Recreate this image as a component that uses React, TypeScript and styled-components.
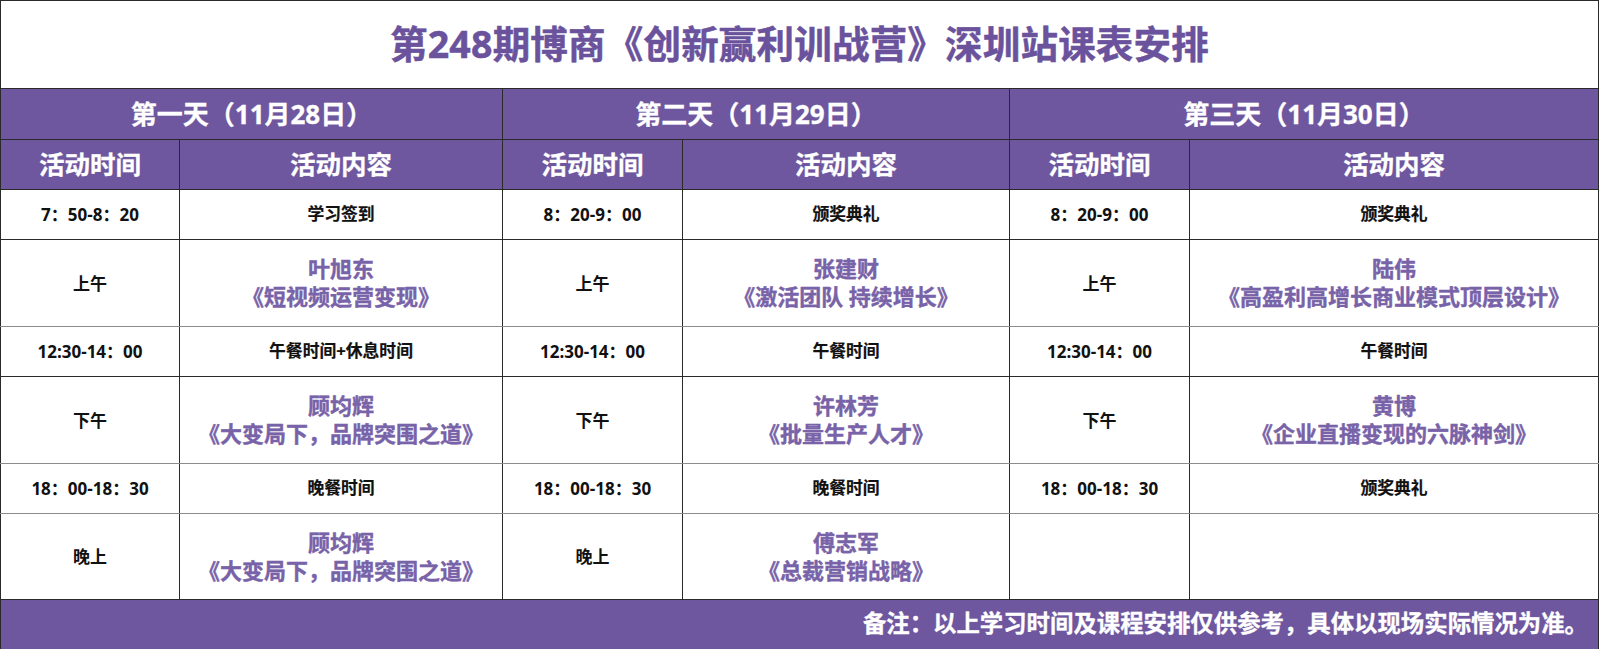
import React from "react";
import styled, { createGlobalStyle } from "styled-components";

const Global = createGlobalStyle`
  html, body { margin: 0; padding: 0; background: #ffffff; }
  body { font-family: "Open Sans", "Noto Sans CJK SC", sans-serif; }
`;

const PURPLE = "#6f579f";
const DARK = "#2a2a2a";
const SOFT = "#8c8c8c";

const Sheet = styled.table`
  width: 1598px;
  table-layout: fixed;
  border-collapse: collapse;
  border: 1px solid ${DARK};
  font-family: "Open Sans", "Noto Sans CJK SC", sans-serif;
  font-weight: 700;
  text-align: center;
`;

const TitleCell = styled.th`
  height: 85px;
  padding: 0 0 2px;
  border: 1px solid ${DARK};
  color: #6a529c;
  font-size: 37.5px;
  line-height: 1;
  letter-spacing: 0.2px;
  -webkit-text-stroke: 0.5px #6a529c;
`;

const HeadCell = styled.th<{ $size: number; $h: number }>`
  height: ${(p) => p.$h}px;
  padding: 0;
  background: ${PURPLE};
  color: #ffffff;
  border: 1px solid ${DARK};
  font-size: ${(p) => p.$size}px;
  line-height: 1;
  -webkit-text-stroke: 0.3px #ffffff;
`;

const Row = styled.tr<{ $h: number; $soft?: boolean }>`
  height: ${(p) => p.$h}px;
  & > td {
    border-bottom: 1px solid ${(p) => (p.$soft ? SOFT : DARK)};
  }
`;

const TimeCell = styled.td`
  padding: 0;
  border-left: 1px solid ${DARK};
  border-right: 1px solid ${DARK};
  color: #111111;
  font-size: 17px;
  line-height: 1;
`;

const PlainCell = styled.td`
  padding: 0;
  border-left: 1px solid ${DARK};
  border-right: 1px solid ${DARK};
  color: #111111;
  font-size: 16.8px;
  line-height: 1;
  -webkit-text-stroke: 0.2px #111111;
`;

const CourseCell = styled.td`
  padding: 0 0 2px;
  border-left: 1px solid ${DARK};
  border-right: 1px solid ${DARK};
  color: #7862a8;
  font-size: 22px;
  line-height: 28px;
  -webkit-text-stroke: 0.4px #7862a8;
`;

const Line = styled.div`
  white-space: nowrap;
`;

const FootCell = styled.td`
  height: 48px;
  padding: 0 10px 2px 0;
  background: ${PURPLE};
  color: #ffffff;
  border: 1px solid ${DARK};
  text-align: right;
  font-size: 23.4px;
  line-height: 1;
  -webkit-text-stroke: 0.3px #ffffff;
`;

type Entry =
  | { kind: "plain"; text: string }
  | { kind: "course"; name: string; title: string }
  | { kind: "empty" };

type Slot = { time: string; entry: Entry };

const days: { label: string; slots: Slot[] }[] = [
  {
    label: "第一天（11月28日）",
    slots: [
      { time: "7：50-8：20", entry: { kind: "plain", text: "学习签到" } },
      { time: "上午", entry: { kind: "course", name: "叶旭东", title: "《短视频运营变现》" } },
      { time: "12:30-14：00", entry: { kind: "plain", text: "午餐时间+休息时间" } },
      { time: "下午", entry: { kind: "course", name: "顾均辉", title: "《大变局下，品牌突围之道》" } },
      { time: "18：00-18：30", entry: { kind: "plain", text: "晚餐时间" } },
      { time: "晚上", entry: { kind: "course", name: "顾均辉", title: "《大变局下，品牌突围之道》" } },
    ],
  },
  {
    label: "第二天（11月29日）",
    slots: [
      { time: "8：20-9：00", entry: { kind: "plain", text: "颁奖典礼" } },
      { time: "上午", entry: { kind: "course", name: "张建财", title: "《激活团队 持续增长》" } },
      { time: "12:30-14：00", entry: { kind: "plain", text: "午餐时间" } },
      { time: "下午", entry: { kind: "course", name: "许林芳", title: "《批量生产人才》" } },
      { time: "18：00-18：30", entry: { kind: "plain", text: "晚餐时间" } },
      { time: "晚上", entry: { kind: "course", name: "傅志军", title: "《总裁营销战略》" } },
    ],
  },
  {
    label: "第三天（11月30日）",
    slots: [
      { time: "8：20-9：00", entry: { kind: "plain", text: "颁奖典礼" } },
      { time: "上午", entry: { kind: "course", name: "陆伟", title: "《高盈利高增长商业模式顶层设计》" } },
      { time: "12:30-14：00", entry: { kind: "plain", text: "午餐时间" } },
      { time: "下午", entry: { kind: "course", name: "黄博", title: "《企业直播变现的六脉神剑》" } },
      { time: "18：00-18：30", entry: { kind: "plain", text: "颁奖典礼" } },
      { time: "", entry: { kind: "empty" } },
    ],
  },
];

const rowSpecs: { h: number; soft: boolean }[] = [
  { h: 50, soft: false },
  { h: 87, soft: true },
  { h: 50, soft: false },
  { h: 87, soft: true },
  { h: 50, soft: true },
  { h: 86, soft: false },
];

const colWidths = [179, 323, 180, 327, 180, 409];

function renderEntry(e: Entry, key: string) {
  if (e.kind === "plain") return <PlainCell key={key}>{e.text}</PlainCell>;
  if (e.kind === "course")
    return (
      <CourseCell key={key}>
        <Line>{e.name}</Line>
        <Line>{e.title}</Line>
      </CourseCell>
    );
  return <PlainCell key={key} />;
}

export default function App() {
  return (
    <>
      <Global />
      <Sheet>
        <colgroup>
          {colWidths.map((w, i) => (
            <col key={i} style={{ width: w }} />
          ))}
        </colgroup>
        <thead>
          <tr>
            <TitleCell colSpan={6}>第248期博商《创新赢利训战营》深圳站课表安排</TitleCell>
          </tr>
          <tr>
            {days.map((d) => (
              <HeadCell key={d.label} colSpan={2} $size={26} $h={50}>
                {d.label}
              </HeadCell>
            ))}
          </tr>
          <tr>
            {days.map((d) => (
              <React.Fragment key={d.label}>
                <HeadCell $size={25.5} $h={49}>活动时间</HeadCell>
                <HeadCell $size={25.5} $h={49}>活动内容</HeadCell>
              </React.Fragment>
            ))}
          </tr>
        </thead>
        <tbody>
          {rowSpecs.map((spec, r) => (
            <Row key={r} $h={spec.h} $soft={spec.soft}>
              {days.map((d, di) => (
                <React.Fragment key={di}>
                  <TimeCell>{d.slots[r].time}</TimeCell>
                  {renderEntry(d.slots[r].entry, `e${di}`)}
                </React.Fragment>
              ))}
            </Row>
          ))}
        </tbody>
        <tfoot>
          <tr>
            <FootCell colSpan={6}>备注：以上学习时间及课程安排仅供参考，具体以现场实际情况为准。</FootCell>
          </tr>
        </tfoot>
      </Sheet>
    </>
  );
}
